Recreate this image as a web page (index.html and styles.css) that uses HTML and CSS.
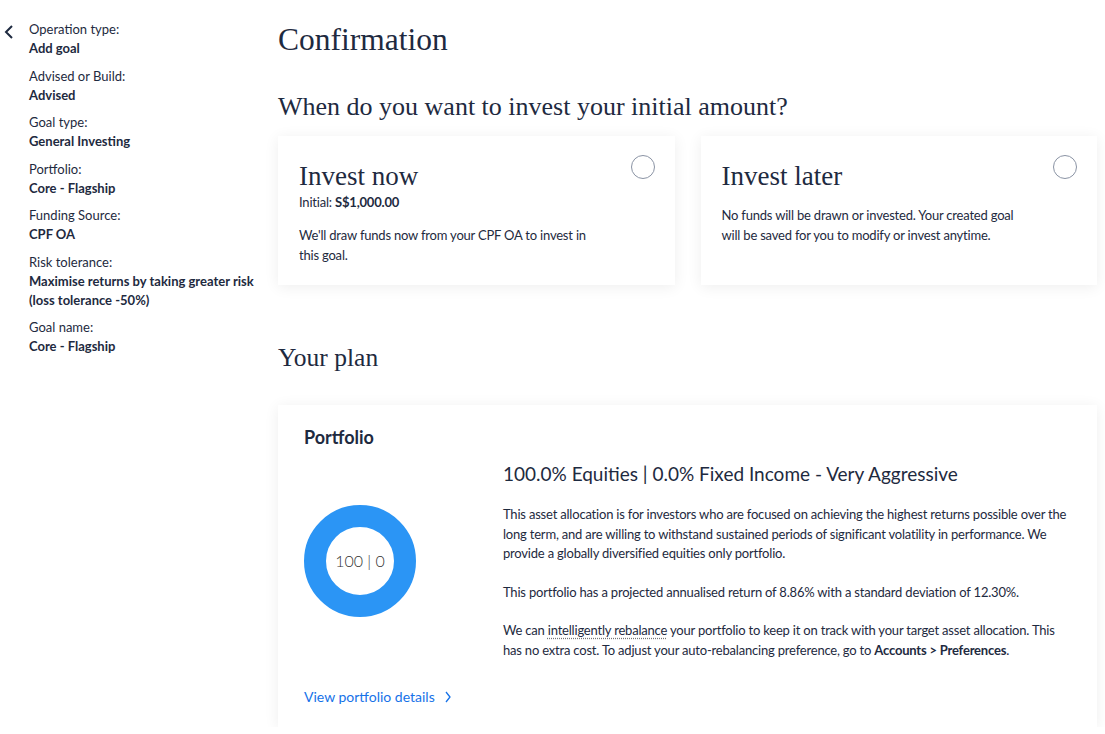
FILE: index.html
```html
<!DOCTYPE html>
<html>
<head>
<meta charset="UTF-8">
<title>Confirmation</title>
<link rel="stylesheet" href="styles.css">
</head>
<body>
<div class="page">
	<aside class="summary">
		<a class="back" href="#" aria-label="Back">
			<svg width="10" height="14" viewBox="0 0 10 14"><polyline points="8,1 2,7 8,13" fill="none" stroke="#1e2a40" stroke-width="2"/></svg>
		</a>
		<dl class="summary-list">
			<div class="item"><dt>Operation type:</dt><dd>Add goal</dd></div>
			<div class="item"><dt>Advised or Build:</dt><dd>Advised</dd></div>
			<div class="item"><dt>Goal type:</dt><dd>General Investing</dd></div>
			<div class="item"><dt>Portfolio:</dt><dd>Core - Flagship</dd></div>
			<div class="item"><dt>Funding Source:</dt><dd>CPF OA</dd></div>
			<div class="item"><dt>Risk tolerance:</dt><dd>Maximise returns by taking greater risk (loss tolerance -50%)</dd></div>
			<div class="item"><dt>Goal name:</dt><dd>Core - Flagship</dd></div>
		</dl>
	</aside>

	<main class="main">
		<h1 class="title">Confirmation</h1>

		<h2 class="section-title">When do you want to invest your initial amount?</h2>
		<div class="options">
			<div class="option">
				<span class="radio"></span>
				<h3 class="option-title">Invest now</h3>
				<div class="option-amount">Initial: <b>S$1,000.00</b></div>
				<p class="option-text">We'll draw funds now from your CPF OA to invest in this goal.</p>
			</div>
			<div class="option">
				<span class="radio"></span>
				<h3 class="option-title">Invest later</h3>
				<p class="option-text">No funds will be drawn or invested. Your created goal will be saved for you to modify or invest anytime.</p>
			</div>
		</div>

		<h2 class="section-title plan-title">Your plan</h2>
		<div class="plan">
			<h4 class="plan-head">Portfolio</h4>
			<div class="plan-body">
				<div class="chart">
					<svg width="112" height="112" viewBox="0 0 112 112">
						<circle cx="56" cy="56" r="45" fill="none" stroke="#2b95f5" stroke-width="22"/>
					</svg>
					<span class="chart-label">100 | 0</span>
				</div>
				<div class="plan-info">
					<div class="alloc">100.0% Equities | 0.0% Fixed Income - Very Aggressive</div>
					<p>This asset allocation is for investors who are focused on achieving the highest returns possible over the long term, and are willing to withstand sustained periods of significant volatility in performance. We provide a globally diversified equities only portfolio.</p>
					<p>This portfolio has a projected annualised return of 8.86% with a standard deviation of 12.30%.</p>
					<p>We can <span class="hint">intelligently rebalance</span> your portfolio to keep it on track with your target asset allocation. This has no extra cost. To adjust your auto-rebalancing preference, go to <b>Accounts &gt; Preferences</b>.</p>
				</div>
			</div>
			<a class="details" href="#">View portfolio details
				<svg width="8" height="12" viewBox="0 0 8 12"><polyline points="2,1 6,6 2,11" fill="none" stroke="#1672e8" stroke-width="1.3"/></svg>
			</a>
		</div>
	</main>
</div>
</body>
</html>
```

FILE: styles.css
```css
body{
	margin: 0;
	background: #ffffff;
	color: #1e2a40;
	font-family: Lato, "Open Sans", sans-serif;
	font-size: 13px;
}

.page{
	display: flex;
	align-items: flex-start;
}

/* left summary */
.summary{
	width: 278px;
	flex: none;
	display: flex;
	padding-top: 20px;
}
.back{
	width: 29px;
	flex: none;
	padding: 5px 0 0 4px;
	box-sizing: border-box;
}
.back svg{display: block;}
.summary-list{
	margin: 0;
}
.summary-list .item{
	margin-bottom: 8.5px;
}
.summary-list dt,
.summary-list dd{
	margin: 0;
	line-height: 19px;
}
.summary-list dd{
	font-weight: bold;
	padding-right: 20px;
}

/* main column */
.main{
	flex: 1;
	padding: 0 8px 0 0;
	letter-spacing: -0.2px;
}
.title{
	margin: 22px 0 0;
	font-family: "Liberation Serif", serif;
	font-weight: normal;
	font-size: 31.5px;
	line-height: 36px;
	letter-spacing: 0;
}
.section-title{
	margin: 34px 0 14px;
	font-family: "Liberation Serif", serif;
	font-weight: normal;
	font-size: 26px;
	line-height: 30px;
	letter-spacing: 0;
}
.plan-title{
	margin: 58px 0 32px;
	font-size: 25.5px;
}

.options{
	display: grid;
	grid-template-columns: 1fr 1fr;
	gap: 26px;
}
.option{
	position: relative;
	background: #fff;
	box-shadow: 0 2px 14px rgba(0,0,0,0.07);
	padding: 24px 76px 20px 21px;
}
.radio{
	position: absolute;
	top: 19px;
	right: 20px;
	width: 22px;
	height: 22px;
	border: 1px solid #8a93a4;
	border-radius: 50%;
}
.option-title{
	margin: 0;
	font-family: "Liberation Serif", serif;
	font-weight: normal;
	font-size: 27px;
	line-height: 32px;
	letter-spacing: 0;
}
.option-amount{
	margin-top: 1px;
	line-height: 19px;
}
.option-text{
	margin: 14px 0 0;
	line-height: 19.5px;
}

.plan{
	background: #fff;
	box-shadow: 0 2px 14px rgba(0,0,0,0.07);
	padding: 20px 26px 21px 26px;
}
.plan-head{
	margin: 0;
	font-size: 18px;
	line-height: 24px;
	font-weight: bold;
	letter-spacing: 0;
}
.plan-body{
	display: flex;
	align-items: center;
	margin-top: 13px;
}
.chart{
	width: 199px;
	flex: none;
	position: relative;
}
.chart svg{display: block;}
.chart-label{
	position: absolute;
	left: 0;
	top: 0;
	width: 112px;
	line-height: 112px;
	text-align: center;
	font-size: 16px;
	font-weight: 300;
	color: #333;
	letter-spacing: 0;
}
.plan-info{
	flex: 1;
}
.alloc{
	font-size: 19px;
	line-height: 24px;
	letter-spacing: 0;
}
.plan-info p{
	margin: 19px 0 0;
	line-height: 19.5px;
}
.hint{
	text-decoration: underline dotted #777;
	text-underline-offset: 3px;
}
.details{
	display: inline-flex;
	align-items: center;
	gap: 9px;
	margin-top: 27px;
	color: #1672e8;
	text-decoration: none;
	font-size: 14px;
	line-height: 19px;
	letter-spacing: 0;
}
```
